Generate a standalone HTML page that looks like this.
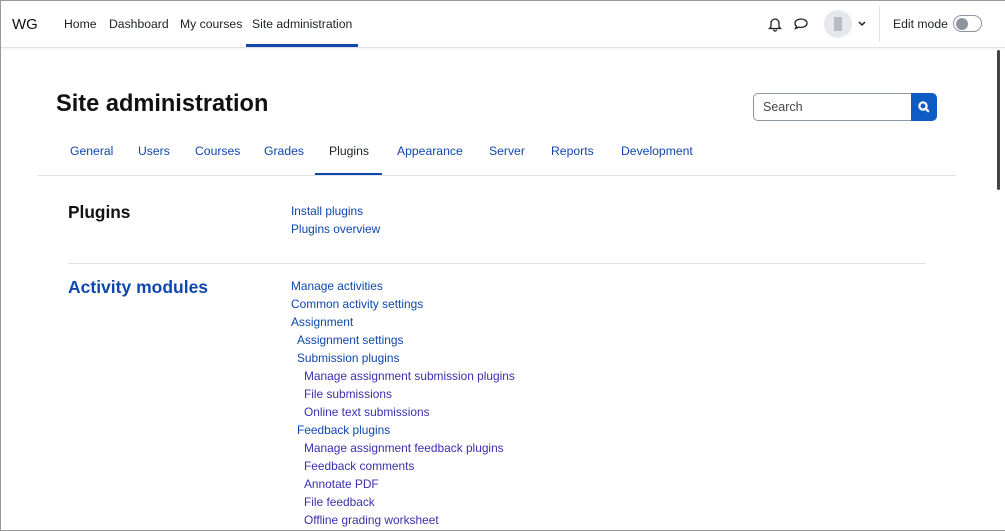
<!DOCTYPE html>
<html><head><style>
*{margin:0;padding:0;box-sizing:border-box}
body{width:1005px;height:531px;overflow:hidden;font-family:"Liberation Sans",sans-serif;background:#fff;position:relative;color:#1d2125}
.frame{position:absolute;inset:0;border:1px solid #9a9a9a;border-right:none}
.nav{position:absolute;left:0;top:0;width:1005px;height:48px;border-bottom:1px solid #dee2e6;box-shadow:0 1px 2px rgba(0,0,0,.06)}
.a{position:absolute;white-space:nowrap}
.nl{font-size:12.2px;top:17px;color:#1d2125}
.l{position:absolute;font-size:11.9px;color:#0f47ad;white-space:nowrap}
.v{color:#3b2fae}
.tab{position:absolute;top:144px;font-size:12.2px;color:#0f47ad}
</style></head><body>
<div class="nav">
<div class="a" style="left:12px;top:16px;font-size:15px;color:#111">WG</div>
<div class="a nl" style="left:64px">Home</div>
<div class="a nl" style="left:109px">Dashboard</div>
<div class="a nl" style="left:180px">My courses</div>
<div class="a nl" style="left:252px">Site administration</div>
<div class="a" style="left:246px;top:44px;width:112px;height:3px;background:#0f47ad"></div>
<svg class="a" style="left:767px;top:16px" width="16" height="16" viewBox="0 0 16 16" fill="none" stroke="#222" stroke-width="1.3"><path d="M4 11V7a4 4 0 0 1 8 0v4l1.5 1.5h-11z M6.5 13.5a1.5 1.5 0 0 0 3 0"/></svg>
<svg class="a" style="left:793px;top:16px" width="16" height="16" viewBox="0 0 16 16" fill="none" stroke="#222" stroke-width="1.3"><path d="M8 3c3.3 0 6 1.8 6 4.2S11.3 11.4 8 11.4c-.8 0-1.6-.1-2.3-.3L2.5 12.5l1-2.3C2.6 9.4 2 8.4 2 7.2 2 4.8 4.7 3 8 3z"/></svg>
<div class="a" style="left:824px;top:10px;width:28px;height:28px;border-radius:50%;background:#e6e8eb"></div>
<div class="a" style="left:834px;top:17px;width:8px;height:14px;background:#b9bcc0"></div>
<svg class="a" style="left:858px;top:21px" width="8" height="6" viewBox="0 0 8 6" fill="none" stroke="#222" stroke-width="1.5"><path d="M1 1l3 3 3-3"/></svg>
<div class="a" style="left:879px;top:6px;width:1px;height:36px;background:#dee2e6"></div>
<div class="a nl" style="left:893px">Edit mode</div>
<div class="a" style="left:953px;top:15px;width:29px;height:17px;border:1px solid #8f959e;border-radius:9px"></div>
<div class="a" style="left:956px;top:18px;width:12px;height:12px;border-radius:50%;background:#8f959e"></div>
</div>
<div class="a" style="left:997px;top:50px;width:3px;height:140px;border-radius:2px;background:#444"></div>
<div class="a" style="left:56px;top:91px;font-size:23.6px;font-weight:bold;color:#111">Site administration</div>
<div class="a" style="left:753px;top:93px;width:160px;height:28px;border:1px solid #8f959e;border-radius:5px 0 0 5px;font-size:12.5px;color:#444;padding:6px 9px">Search</div>
<div class="a" style="left:911px;top:93px;width:26px;height:28px;background:#0f5bc4;border-radius:0 5px 5px 0"></div>
<svg class="a" style="left:917px;top:100px" width="14" height="14" viewBox="0 0 14 14" fill="none" stroke="#fff" stroke-width="2.2"><circle cx="6" cy="6" r="3.6"/><path d="M8.8 8.8l3 3"/></svg>
<div class="tab" style="left:70px">General</div>
<div class="tab" style="left:138px">Users</div>
<div class="tab" style="left:195px">Courses</div>
<div class="tab" style="left:264px">Grades</div>
<div class="tab" style="left:329px;color:#1d2125">Plugins</div>
<div class="tab" style="left:397px">Appearance</div>
<div class="tab" style="left:489px">Server</div>
<div class="tab" style="left:551px">Reports</div>
<div class="tab" style="left:621px">Development</div>
<div class="a" style="left:37px;top:175px;width:919px;height:1px;background:#dee2e6"></div>
<div class="a" style="left:315px;top:173px;width:67px;height:2px;background:#0f47ad"></div>
<div class="a" style="left:68px;top:202px;font-size:17.3px;font-weight:bold;color:#111">Plugins</div>
<div class="l" style="left:291px;top:204px">Install plugins</div>
<div class="l" style="left:291px;top:222px">Plugins overview</div>
<div class="a" style="left:68px;top:263px;width:858px;height:1px;background:#dee2e6"></div>
<div class="a" style="left:68px;top:277px;font-size:17.5px;font-weight:bold;color:#0f47ad">Activity modules</div>
<div class="l" style="left:291px;top:279px">Manage activities</div>
<div class="l" style="left:291px;top:297px">Common activity settings</div>
<div class="l" style="left:291px;top:315px">Assignment</div>
<div class="l" style="left:297px;top:333px">Assignment settings</div>
<div class="l" style="left:297px;top:351px">Submission plugins</div>
<div class="l v" style="left:304px;top:369px">Manage assignment submission plugins</div>
<div class="l v" style="left:304px;top:387px">File submissions</div>
<div class="l v" style="left:304px;top:405px">Online text submissions</div>
<div class="l" style="left:297px;top:423px">Feedback plugins</div>
<div class="l v" style="left:304px;top:441px">Manage assignment feedback plugins</div>
<div class="l v" style="left:304px;top:459px">Feedback comments</div>
<div class="l v" style="left:304px;top:477px">Annotate PDF</div>
<div class="l v" style="left:304px;top:495px">File feedback</div>
<div class="l v" style="left:304px;top:513px">Offline grading worksheet</div>
<div class="frame"></div>
</body></html>
